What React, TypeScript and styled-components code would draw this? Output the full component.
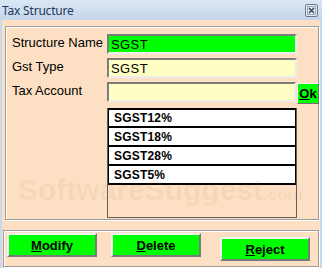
import styled, { createGlobalStyle } from "styled-components";

const GlobalStyle = createGlobalStyle`
  body {
    margin: 0;
    font-family: "Liberation Sans", Arial, sans-serif;
  }
`;

const Window = styled.div`
  position: relative;
  width: 322px;
  height: 268px;
  display: flex;
  flex-direction: column;
  background: #c9d9ec;
  overflow: hidden;
`;

const TitleBar = styled.div`
  height: 20px;
  flex: none;
  display: flex;
  align-items: center;
  justify-content: space-between;
  padding: 0 4px 0 2px;
  background: linear-gradient(#dbe7f5, #c4d5ea);
`;

const Title = styled.span`
  font-family: "Noto Sans", "Liberation Sans", sans-serif;
  font-size: 12px;
  letter-spacing: -0.2px;
  color: #1e395b;
`;

const CloseBox = styled.div`
  width: 13px;
  height: 13px;
  display: flex;
`;

const Body = styled.div`
  flex: 1;
  margin: 0 2px;
  padding: 6px 1px 0 1px;
  background: #fde0c3;
`;

const GroupBox = styled.div<{ $inset?: number }>`
  margin-left: ${(p) => p.$inset ?? 0}px;
  border: 1px solid #9c9c9c;
  box-shadow: inset 1px 1px 0 #ffffff, 1px 1px 0 #ffffff;
`;

const FormGrid = styled.div`
  height: 185px;
  padding: 7px 0 0 6px;
  display: grid;
  grid-template-columns: 95px 190px 22px;
  grid-auto-rows: min-content;
  row-gap: 4px;
  align-items: start;
`;

const Label = styled.label`
  margin-top: 1px;
  font-size: 13px;
  line-height: 16px;
  color: #000;
`;

const Field = styled.input<{ $bg: string; $w?: number }>`
  box-sizing: border-box;
  width: ${(p) => p.$w ?? 190}px;
  height: 20px;
  margin: 0;
  padding: 0 2px;
  border: 2px solid;
  border-color: #7c7c7c #ececec #ececec #7c7c7c;
  background: ${(p) => p.$bg};
  font-family: "Liberation Sans", Arial, sans-serif;
  font-size: 13px;
  letter-spacing: 0.4px;
  color: #000;
  outline: none;
`;

const FieldRow = styled.div`
  grid-column: 2 / 4;
  display: flex;
  align-items: flex-start;
`;

const OkButton = styled.button`
  box-sizing: border-box;
  width: 22px;
  height: 21px;
  margin: 1px 0 0 1px;
  padding: 0;
  border: 1px solid;
  border-color: #f4f4f4 #707070 #707070 #f4f4f4;
  background: #00ff00;
  font-family: "Liberation Sans", Arial, sans-serif;
  font-weight: bold;
  font-size: 13px;
  color: #000;
`;

const ListBox = styled.div`
  grid-column: 2;
  box-sizing: border-box;
  height: 110px;
  border: 1px solid #5e5e5e;
  border-top: none;
`;

const ListItem = styled.div`
  box-sizing: border-box;
  height: 19px;
  padding: 0 0 0 5px;
  background: #ffffff;
  border: 1px solid #000;
  border-top: none;
  border-bottom: 2px solid #000;
  font-size: 12px;
  font-weight: bold;
  letter-spacing: 0.2px;
  line-height: 18px;
  color: #000;

  &:first-child {
    height: 20px;
    border-top: 2px solid #000;
    line-height: 17px;
  }
`;

const ButtonBar = styled.div`
  height: 33px;
  padding: 2px 0 0 3px;
  display: flex;
  align-items: flex-start;
  gap: 14px;
`;

const ActionButton = styled.button<{ $drop?: boolean }>`
  box-sizing: border-box;
  width: 90px;
  height: 24px;
  margin: ${(p) => (p.$drop ? "4px 0 0 5px" : "0")};
  padding: 0;
  border: 2px solid;
  border-color: #f2f2f2 #7a7a7a #7a7a7a #f2f2f2;
  background: #00ff00;
  font-family: "Liberation Sans", Arial, sans-serif;
  font-weight: bold;
  font-size: 13px;
  color: #000;
`;

const Key = styled.span`
  text-decoration: underline;
`;

const Watermark = styled.div`
  position: absolute;
  left: 18px;
  top: 175px;
  font-family: "Liberation Sans", Arial, sans-serif;
  font-weight: bold;
  font-size: 30px;
  line-height: 30px;
  color: rgba(170, 120, 80, 0.09);
  pointer-events: none;
  white-space: nowrap;

  small {
    font-size: 17px;
  }
`;

const taxes = ["SGST12%", "SGST18%", "SGST28%", "SGST5%"];

export default function App() {
  return (
    <>
      <GlobalStyle />
      <Window>
        <TitleBar>
          <Title>Tax Structure</Title>
          <CloseBox>
            <svg width="13" height="13" viewBox="0 0 13 13">
              <rect x="0.5" y="0.5" width="12" height="12" rx="1.5" fill="#e4ecf6" stroke="#6a7c92" />
              <rect x="2.5" y="2.5" width="8" height="8" fill="none" stroke="#9aa8b8" />
              <path d="M4 4 L9 9 M9 4 L4 9" stroke="#3a4a5e" strokeWidth="1.6" />
            </svg>
          </CloseBox>
        </TitleBar>
        <Body>
          <GroupBox $inset={2}>
            <FormGrid>
              <Label>Structure Name</Label>
              <Field $bg="#00ff00" readOnly value="SGST" />
              <span />
              <Label>Gst Type</Label>
              <Field $bg="#ffffc4" readOnly value="SGST" />
              <span />
              <Label>Tax Account</Label>
              <FieldRow>
                <Field $bg="#ffffc4" $w={189} readOnly value="" />
                <OkButton>
                  <Key>O</Key>k
                </OkButton>
              </FieldRow>
              <span />
              <ListBox>
                {taxes.map((t) => (
                  <ListItem key={t}>{t}</ListItem>
                ))}
              </ListBox>
            </FormGrid>
          </GroupBox>
          <div style={{ height: 10 }} />
          <GroupBox>
            <ButtonBar>
              <ActionButton>
                <Key>M</Key>odify
              </ActionButton>
              <ActionButton>
                <Key>D</Key>elete
              </ActionButton>
              <ActionButton $drop>
                <Key>R</Key>eject
              </ActionButton>
            </ButtonBar>
          </GroupBox>
        </Body>
        <Watermark>
          SoftwareSuggest<small>.com</small>
        </Watermark>
      </Window>
    </>
  );
}
